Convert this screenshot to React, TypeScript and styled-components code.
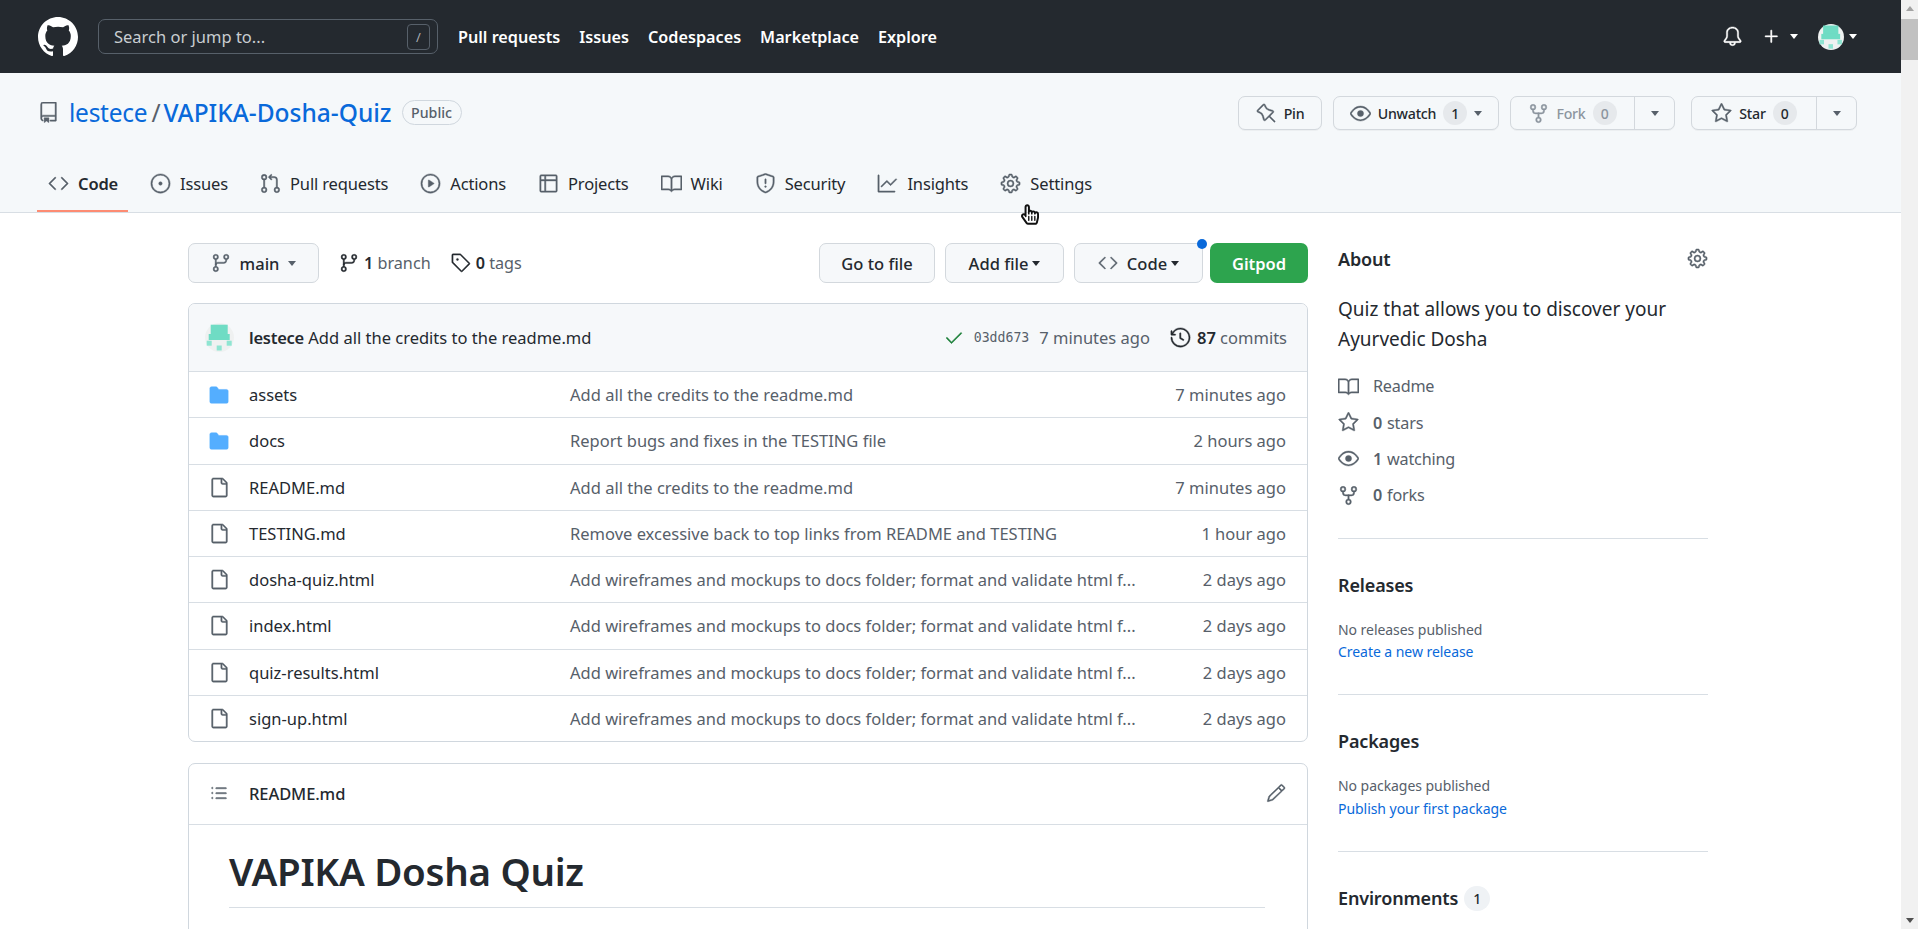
import React from "react";
import styled, { createGlobalStyle } from "styled-components";
import {
  GoRepo, GoBell, GoPlus, GoPin, GoEye, GoRepoForked, GoStar, GoCode,
  GoIssueOpened, GoGitPullRequest, GoPlay, GoTable, GoBook, GoShield, GoGraph, GoGear,
  GoGitBranch, GoTag, GoCheck, GoHistory, GoFileDirectoryFill, GoFile, GoListUnordered, GoPencil,
} from "react-icons/go";
import { FaRegHandPointer } from "react-icons/fa";

const Global = createGlobalStyle`
  html, body { margin: 0; padding: 0; height: 929px; overflow: hidden; background: #fff; }
  body { font-family: "Noto Sans", "Open Sans", sans-serif; color: #24292f; }
  * { box-sizing: border-box; }
  svg[stroke="currentColor"] { stroke-width: 0.5; }
`;

const Page = styled.div`display: flex; height: 929px; position: relative; overflow: hidden;`;
const Main = styled.div`flex: 1; min-width: 0; overflow: hidden;`;

const ScrollBar = styled.aside`
  width: 17px; background: #f1f1f1; display: flex; flex-direction: column; align-items: center;
  justify-content: space-between; position: relative;
`;
const ScrollThumb = styled.div`position: absolute; top: 19px; left: 0; width: 17px; height: 41px; background: #c1c1c1;`;
const ScrollArrow = styled.div<{ $up?: boolean }>`
  width: 0; height: 0; margin: 6px 0; border-left: 4.5px solid transparent; border-right: 4.5px solid transparent;
  ${p => (p.$up ? "border-bottom: 5px solid #a3a3a3;" : "border-top: 5px solid #505050;")}
`;

const Header = styled.header`
  height: 73px; background: #24292f; display: flex; align-items: center; padding: 0 44px 0 38px; color: #fff;
`;
const LogoSvg = styled.svg`width: 40px; height: 40px; fill: #fff; flex: none;`;
const Search = styled.div`
  width: 340px; height: 35px; margin-left: 20px; border: 1px solid #57606a; border-radius: 7px; display: flex;
  align-items: center; justify-content: space-between; padding: 0 7px 0 15px; color: #c9cdd1; font-size: 16.5px;
`;
const SlashKey = styled.span`
  width: 23px; height: 26px; border: 1px solid #57606a; border-radius: 4px; display: flex; align-items: center;
  justify-content: center; font-size: 13px; color: #a8adb3;
`;
const Nav = styled.nav`display: flex; gap: 19px; margin-left: 20px; font-size: 16.2px; font-weight: 600;`;
const Spacer = styled.div`flex: 1;`;
const HeaderIcons = styled.div`display: flex; align-items: center;`;
const WhiteCaret = styled.span`
  width: 0; height: 0; border-left: 4.5px solid transparent; border-right: 4.5px solid transparent;
  border-top: 5px solid #fff; margin-left: 5px;
`;
const PlusCaret = styled(WhiteCaret)`margin-left: 8px;`;
const BellIcon = styled(GoBell)`width: 21px; height: 21px; margin-right: 18px;`;
const PlusIcon = styled(GoPlus)`width: 21px; height: 21px;`;
const AvatarWrap = styled.span`display: flex; margin-left: 20px; align-items: center;`;

const RepoHead = styled.div`
  height: 140px; background: #f5f8fa; border-bottom: 1px solid #d8dee4; display: flex; flex-direction: column;
`;
const TitleRow = styled.div`
  display: flex; align-items: center; height: 34px; margin-top: 23px; padding: 0 44px 0 38px;
`;
const RepoIcon = styled(GoRepo)`width: 21px; height: 21px; color: #57606a; flex: none; margin-bottom: 2px;`;
const RepoTitle = styled.div`
  display: flex; align-items: center; margin-left: 10px; font-size: 24.5px; color: #0969da; padding-bottom: 2px;
`;
const RepoOwner = styled.span`letter-spacing: -0.25px;`;
const RepoSlash = styled.span`color: #57606a; margin: 0 3px 0 4px;`;
const RepoName = styled.span`font-weight: 500;`;
const PublicBadge = styled.span`
  margin: 0 0 2px 10px; height: 25px; width: 60px; border: 1px solid #d0d7de; border-radius: 13px; font-size: 14.2px;
  color: #57606a; display: flex; align-items: center; justify-content: center; font-weight: 500;
`;
const Actions = styled.div`display: flex; gap: 11px; color: #24292f;`;
const RepoBtn = styled.div<{ $w: number; $muted?: boolean }>`
  width: ${p => p.$w}px; height: 34px; border: 1px solid #d3d8dd; border-radius: 7px; display: flex; align-items: center;
  font-size: 14.2px; font-weight: 500; letter-spacing: -0.25px; color: ${p => (p.$muted ? "#8c959f" : "#24292f")};
  box-shadow: 0 1px 0 rgba(27,31,36,.04); background: #f5f8fa;
`;
const StarBtn = styled(RepoBtn)`margin-left: 5px;`;
const BtnMain = styled.div`flex: 1; display: flex; align-items: center; justify-content: center; gap: 7px; height: 100%;`;
const BtnSplit = styled.div`
  width: 40px; height: 100%; border-left: 1px solid #d3d8dd; display: flex; align-items: center; justify-content: center;
`;
const Caret = styled.span<{ $color?: string }>`
  width: 0; height: 0; border-left: 4.5px solid transparent; border-right: 4.5px solid transparent;
  border-top: 5px solid ${p => p.$color || "#57606a"};
`;
const TightCaret = styled(Caret)`margin-left: -5px;`;
const Pill = styled.span<{ $muted?: boolean }>`
  min-width: 24px; height: 24px; border-radius: 12px; background: #e6e9ec; display: flex; align-items: center;
  justify-content: center; font-size: 14px; color: ${p => (p.$muted ? "#8c959f" : "#24292f")};
`;
const BtnIcon = styled.span<{ $muted?: boolean }>`
  display: flex; color: ${p => (p.$muted ? "#8c959f" : "#57606a")};
  svg { width: 21px; height: 21px; }
`;

const Tabs = styled.nav`display: flex; gap: 11px; margin-top: auto; padding-left: 37px;`;
const Tab = styled.a<{ $active?: boolean }>`
  display: flex; align-items: center; gap: 9px; height: 50px; padding: 0 10px 6px 11px; font-size: 16.5px;
  letter-spacing: -0.15px; color: #24292f; font-weight: ${p => (p.$active ? 600 : 400)};
  border-bottom: 2px solid ${p => (p.$active ? "#fd8c73" : "transparent")};
  svg { width: 21px; height: 21px; color: #57606a; flex: none; }
`;

const Content = styled.div`display: flex; padding: 30px 0 0 188px; gap: 30px;`;
const LeftCol = styled.div`width: 1120px; flex: none;`;
const RightCol = styled.aside`width: 370px; flex: none;`;

const BranchBar = styled.div`display: flex; align-items: center; height: 40px; margin-bottom: 20px;`;
const GrayBtn = styled.div<{ $w: number }>`
  width: ${p => p.$w}px; height: 40px; background: #f6f8fa; border: 1px solid #d3d8dd; border-radius: 7px; display: flex;
  align-items: center; justify-content: center; font-size: 16.5px; font-weight: 500; gap: 9px;
  svg { width: 20px; height: 20px; color: #57606a; }
`;
const BranchMeta = styled.span`
  display: flex; align-items: center; gap: 5px; font-size: 16.2px; color: #57606a; margin-left: 20px;
  svg { width: 20px; height: 20px; color: #24292f; }
  b { color: #24292f; font-weight: 600; }
`;
const BarActions = styled.div`margin-left: auto; display: flex; gap: 10px; position: relative;`;
const CodeBtnWrap = styled.div`position: relative; margin-right: -3px;`;
const BlueDot = styled.span`
  position: absolute; right: -4px; top: -4px; width: 10px; height: 10px; border-radius: 50%; background: #0969da;
`;
const GitpodBtn = styled.div`
  width: 98px; height: 40px; background: #2da44e; color: #fff; border-radius: 7px; display: flex; align-items: center;
  justify-content: center; font-size: 16.5px; font-weight: 600;
`;

const Box = styled.div`border: 1px solid #d0d7de; border-radius: 7px; overflow: hidden;`;
const CommitBar = styled.div`
  height: 68px; background: #f6f8fa; border-bottom: 1px solid #d8dee4; display: flex; align-items: center;
  padding: 0 20px 0 16px; font-size: 16.5px;
`;
const CommitMsg = styled.span`margin-left: 15px; color: #24292f; b { font-weight: 600; letter-spacing: -0.25px; }`;
const CommitMeta = styled.div`
  margin-left: auto; display: flex; align-items: center; color: #57606a;
`;
const CheckIcon = styled(GoCheck)`width: 20px; height: 20px; color: #1a7f37; margin-right: 10px;`;
const Hash = styled.code`font-family: "DejaVu Sans Mono", "Liberation Mono", monospace; font-size: 13.2px; margin-right: 10px;`;
const Commits = styled.span`
  display: flex; align-items: center; gap: 6px; color: #57606a; margin-left: 20px;
  svg { width: 21px; height: 21px; color: #24292f; }
  b { color: #24292f; font-weight: 600; }
`;
const Row = styled.div`
  height: 46.25px; display: grid; grid-template-columns: 20px 341px 1fr auto; align-items: center;
  padding: 0 21px 0 20px; font-size: 16.5px; border-bottom: 1px solid #d8dee4;
  &:last-child { border-bottom: 0; height: 45.25px; }
`;
const RowName = styled.span`padding-left: 20px; color: #24292f;`;
const RowMsg = styled.span`color: #57606a; white-space: nowrap;`;
const RowAge = styled.span`color: #57606a;`;
const FolderIcon = styled(GoFileDirectoryFill)`width: 22px; height: 22px; color: #54aeff; margin-left: -1px;`;
const FileIcon = styled(GoFile)`width: 21px; height: 21px; color: #57606a;`;

const ReadmeBox = styled(Box)`margin-top: 21px; height: 400px;`;
const ReadmeHead = styled.div`
  height: 61px; border-bottom: 1px solid #d8dee4; display: flex; align-items: center; padding: 0 21px 2px 20px;
  font-size: 16.5px; font-weight: 500; letter-spacing: -0.1px;
`;
const ListIcon = styled(GoListUnordered)`width: 20px; height: 20px; color: #57606a; margin-right: 20px;`;
const PencilIcon = styled(GoPencil)`width: 20px; height: 20px; color: #57606a; margin-left: auto;`;
const ReadmeBody = styled.div`padding: 22px 42px 0 40px;`;
const H1 = styled.h1`
  margin: 0; font-size: 38.5px; font-weight: 600; line-height: 1.25; padding-bottom: 12px; letter-spacing: -0.3px;
  border-bottom: 1px solid #d8dee4;
`;

const AboutHead = styled.div`display: flex; align-items: center; justify-content: space-between; margin-top: 2px; height: 28px;`;
const SideTitle = styled.h2`margin: 0; font-size: 18px; font-weight: 600; letter-spacing: -0.15px; display: flex; align-items: center; gap: 6px;`;
const SideGear = styled(GoGear)`width: 21px; height: 21px; color: #57606a; margin-bottom: 2px;`;
const About = styled.p`margin: 21px 0 0; font-size: 19px; line-height: 30px;`;
const Facts = styled.ul`list-style: none; margin: 14px 0 0; padding: 0;`;
const Fact = styled.li`
  height: 36.4px; display: flex; align-items: center; color: #57606a; font-size: 16.2px; letter-spacing: -0.2px;
  svg { width: 21px; height: 21px; margin-right: 14px; flex: none; }
  b { font-weight: 600; margin-right: 5px; }
`;
const Rule = styled.hr`border: 0; border-top: 1px solid #d8dee4; margin: 0;`;
const FactsRule = styled(Rule)`margin-top: 24px;`;
const SideSection = styled.section`height: 155.5px; padding-top: 34px;`;
const Small = styled.div`font-size: 14px; color: #57606a; line-height: 22.5px; letter-spacing: -0.05px; margin-top: 22px;`;
const SmallLink = styled.div`font-size: 14px; color: #0969da; line-height: 22.5px; letter-spacing: -0.05px;`;
const EnvPill = styled.span`
  width: 26px; height: 25px; border-radius: 13px; background: #eff2f5; font-size: 14px; font-weight: 500; display: flex;
  align-items: center; justify-content: center; color: #24292f;
`;
const Hand = styled(FaRegHandPointer)`
  position: absolute; left: 1021px; top: 202px; width: 18px; height: 25px; color: #111;
`;

const Logo = () => (
  <LogoSvg viewBox="0 0 16 16">
    <path d="M8 0C3.58 0 0 3.58 0 8c0 3.54 2.29 6.53 5.47 7.59.4.07.55-.17.55-.38 0-.19-.01-.82-.01-1.49-2.01.37-2.53-.49-2.69-.94-.09-.23-.48-.94-.82-1.13-.28-.15-.68-.52-.01-.53.63-.01 1.08.58 1.23.82.72 1.21 1.87.87 2.33.66.07-.52.28-.87.51-1.07-1.78-.2-3.64-.89-3.64-3.95 0-.87.31-1.59.82-2.15-.08-.2-.36-1.02.08-2.12 0 0 .67-.21 2.2.82.64-.18 1.32-.27 2-.27.68 0 1.36.09 2 .27 1.53-1.04 2.2-.82 2.2-.82.44 1.1.16 1.92.08 2.12.51.56.82 1.27.82 2.15 0 3.07-1.87 3.75-3.65 3.95.29.25.54.73.54 1.48 0 1.07-.01 1.93-.01 2.2 0 .21.15.46.55.38A8.013 8.013 0 0016 8c0-4.42-3.58-8-8-8z" />
  </LogoSvg>
);

const Avatar = ({ size }: { size: number }) => (
  <svg width={size} height={size} viewBox="0 0 29 29">
    <circle cx="14.5" cy="14.5" r="14.5" fill="#eff1f1" />
    <rect x="5.7" y="1.7" width="17" height="15" fill="#6fdcc4" />
    <rect x="3.7" y="11" width="21" height="6" fill="#6fdcc4" />
    <rect x="1.7" y="17.7" width="5" height="5" fill="#8fe5d2" />
    <rect x="11.7" y="22.5" width="5" height="5" fill="#8fe5d2" />
    <rect x="21.7" y="17.7" width="5" height="5" fill="#8fe5d2" />
  </svg>
);

const navItems = ["Pull requests", "Issues", "Codespaces", "Marketplace", "Explore"];
const tabs: [React.ReactNode, string][] = [
  [<GoCode key="a" />, "Code"],
  [<GoIssueOpened key="b" />, "Issues"],
  [<GoGitPullRequest key="c" />, "Pull requests"],
  [<GoPlay key="d" />, "Actions"],
  [<GoTable key="e" />, "Projects"],
  [<GoBook key="f" />, "Wiki"],
  [<GoShield key="g" />, "Security"],
  [<GoGraph key="h" />, "Insights"],
  [<GoGear key="i" />, "Settings"],
];
const WF = "Add wireframes and mockups to docs folder; format and validate html f...";
const rows = [
  { dir: true, name: "assets", msg: "Add all the credits to the readme.md", age: "7 minutes ago" },
  { dir: true, name: "docs", msg: "Report bugs and fixes in the TESTING file", age: "2 hours ago" },
  { dir: false, name: "README.md", msg: "Add all the credits to the readme.md", age: "7 minutes ago" },
  { dir: false, name: "TESTING.md", msg: "Remove excessive back to top links from README and TESTING", age: "1 hour ago" },
  { dir: false, name: "dosha-quiz.html", msg: WF, age: "2 days ago" },
  { dir: false, name: "index.html", msg: WF, age: "2 days ago" },
  { dir: false, name: "quiz-results.html", msg: WF, age: "2 days ago" },
  { dir: false, name: "sign-up.html", msg: WF, age: "2 days ago" },
];

export default function App() {
  return (
    <Page>
      <Global />
      <Main>
        <Header>
          <Logo />
          <Search>
            <span>Search or jump to...</span>
            <SlashKey>/</SlashKey>
          </Search>
          <Nav>{navItems.map(n => <span key={n}>{n}</span>)}</Nav>
          <Spacer />
          <HeaderIcons>
            <BellIcon />
            <PlusIcon />
            <PlusCaret />
            <AvatarWrap><Avatar size={26} /></AvatarWrap>
            <WhiteCaret />
          </HeaderIcons>
        </Header>

        <RepoHead>
          <TitleRow>
            <RepoIcon />
            <RepoTitle>
              <RepoOwner>lestece</RepoOwner>
              <RepoSlash>/</RepoSlash>
              <RepoName>VAPIKA-Dosha-Quiz</RepoName>
            </RepoTitle>
            <PublicBadge>Public</PublicBadge>
            <Spacer />
            <Actions>
              <RepoBtn $w={84}><BtnMain><BtnIcon><GoPin /></BtnIcon>Pin</BtnMain></RepoBtn>
              <RepoBtn $w={166}>
                <BtnMain>
                  <BtnIcon><GoEye /></BtnIcon><span>Unwatch</span><Pill>1</Pill><Caret />
                </BtnMain>
              </RepoBtn>
              <RepoBtn $w={165} $muted>
                <BtnMain><BtnIcon $muted><GoRepoForked /></BtnIcon>Fork<Pill $muted>0</Pill></BtnMain>
                <BtnSplit><Caret /></BtnSplit>
              </RepoBtn>
              <StarBtn $w={166}>
                <BtnMain><BtnIcon><GoStar /></BtnIcon>Star<Pill>0</Pill></BtnMain>
                <BtnSplit><Caret /></BtnSplit>
              </StarBtn>
            </Actions>
          </TitleRow>
          <Tabs>
            {tabs.map(([icon, label], i) => (
              <Tab key={label} $active={i === 0}>{icon}{label}</Tab>
            ))}
          </Tabs>
        </RepoHead>

        <Content>
          <LeftCol>
            <BranchBar>
              <GrayBtn $w={131}><GoGitBranch />main<Caret /></GrayBtn>
              <BranchMeta><GoGitBranch /><span><b>1</b> branch</span></BranchMeta>
              <BranchMeta><GoTag /><span><b>0</b> tags</span></BranchMeta>
              <BarActions>
                <GrayBtn $w={116}>Go to file</GrayBtn>
                <GrayBtn $w={119}>Add file<TightCaret $color="#24292f" /></GrayBtn>
                <CodeBtnWrap>
                  <GrayBtn $w={129}><GoCode />Code<TightCaret $color="#24292f" /></GrayBtn>
                  <BlueDot />
                </CodeBtnWrap>
                <GitpodBtn>Gitpod</GitpodBtn>
              </BarActions>
            </BranchBar>

            <Box>
              <CommitBar>
                <Avatar size={29} />
                <CommitMsg><b>lestece</b> Add all the credits to the readme.md</CommitMsg>
                <CommitMeta>
                  <CheckIcon />
                  <Hash>03dd673</Hash>
                  <span>7 minutes ago</span>
                  <Commits><GoHistory /><span><b>87</b> commits</span></Commits>
                </CommitMeta>
              </CommitBar>
              {rows.map(r => (
                <Row key={r.name}>
                  {r.dir ? <FolderIcon /> : <FileIcon />}
                  <RowName>{r.name}</RowName>
                  <RowMsg>{r.msg}</RowMsg>
                  <RowAge>{r.age}</RowAge>
                </Row>
              ))}
            </Box>

            <ReadmeBox>
              <ReadmeHead><ListIcon />README.md<PencilIcon /></ReadmeHead>
              <ReadmeBody><H1>VAPIKA Dosha Quiz</H1></ReadmeBody>
            </ReadmeBox>
          </LeftCol>

          <RightCol>
            <AboutHead><SideTitle>About</SideTitle><SideGear /></AboutHead>
            <About>Quiz that allows you to discover your<br />Ayurvedic Dosha</About>
            <Facts>
              <Fact><GoBook />Readme</Fact>
              <Fact><GoStar /><b>0</b>stars</Fact>
              <Fact><GoEye /><b>1</b>watching</Fact>
              <Fact><GoRepoForked /><b>0</b>forks</Fact>
            </Facts>
            <FactsRule />
            <SideSection>
              <SideTitle>Releases</SideTitle>
              <Small>No releases published</Small>
              <SmallLink>Create a new release</SmallLink>
            </SideSection>
            <Rule />
            <SideSection>
              <SideTitle>Packages</SideTitle>
              <Small>No packages published</Small>
              <SmallLink>Publish your first package</SmallLink>
            </SideSection>
            <Rule />
            <SideSection>
              <SideTitle>Environments <EnvPill>1</EnvPill></SideTitle>
            </SideSection>
          </RightCol>
        </Content>
      </Main>
      <ScrollBar>
        <ScrollArrow $up />
        <ScrollThumb />
        <ScrollArrow />
      </ScrollBar>
      <Hand />
    </Page>
  );
}
